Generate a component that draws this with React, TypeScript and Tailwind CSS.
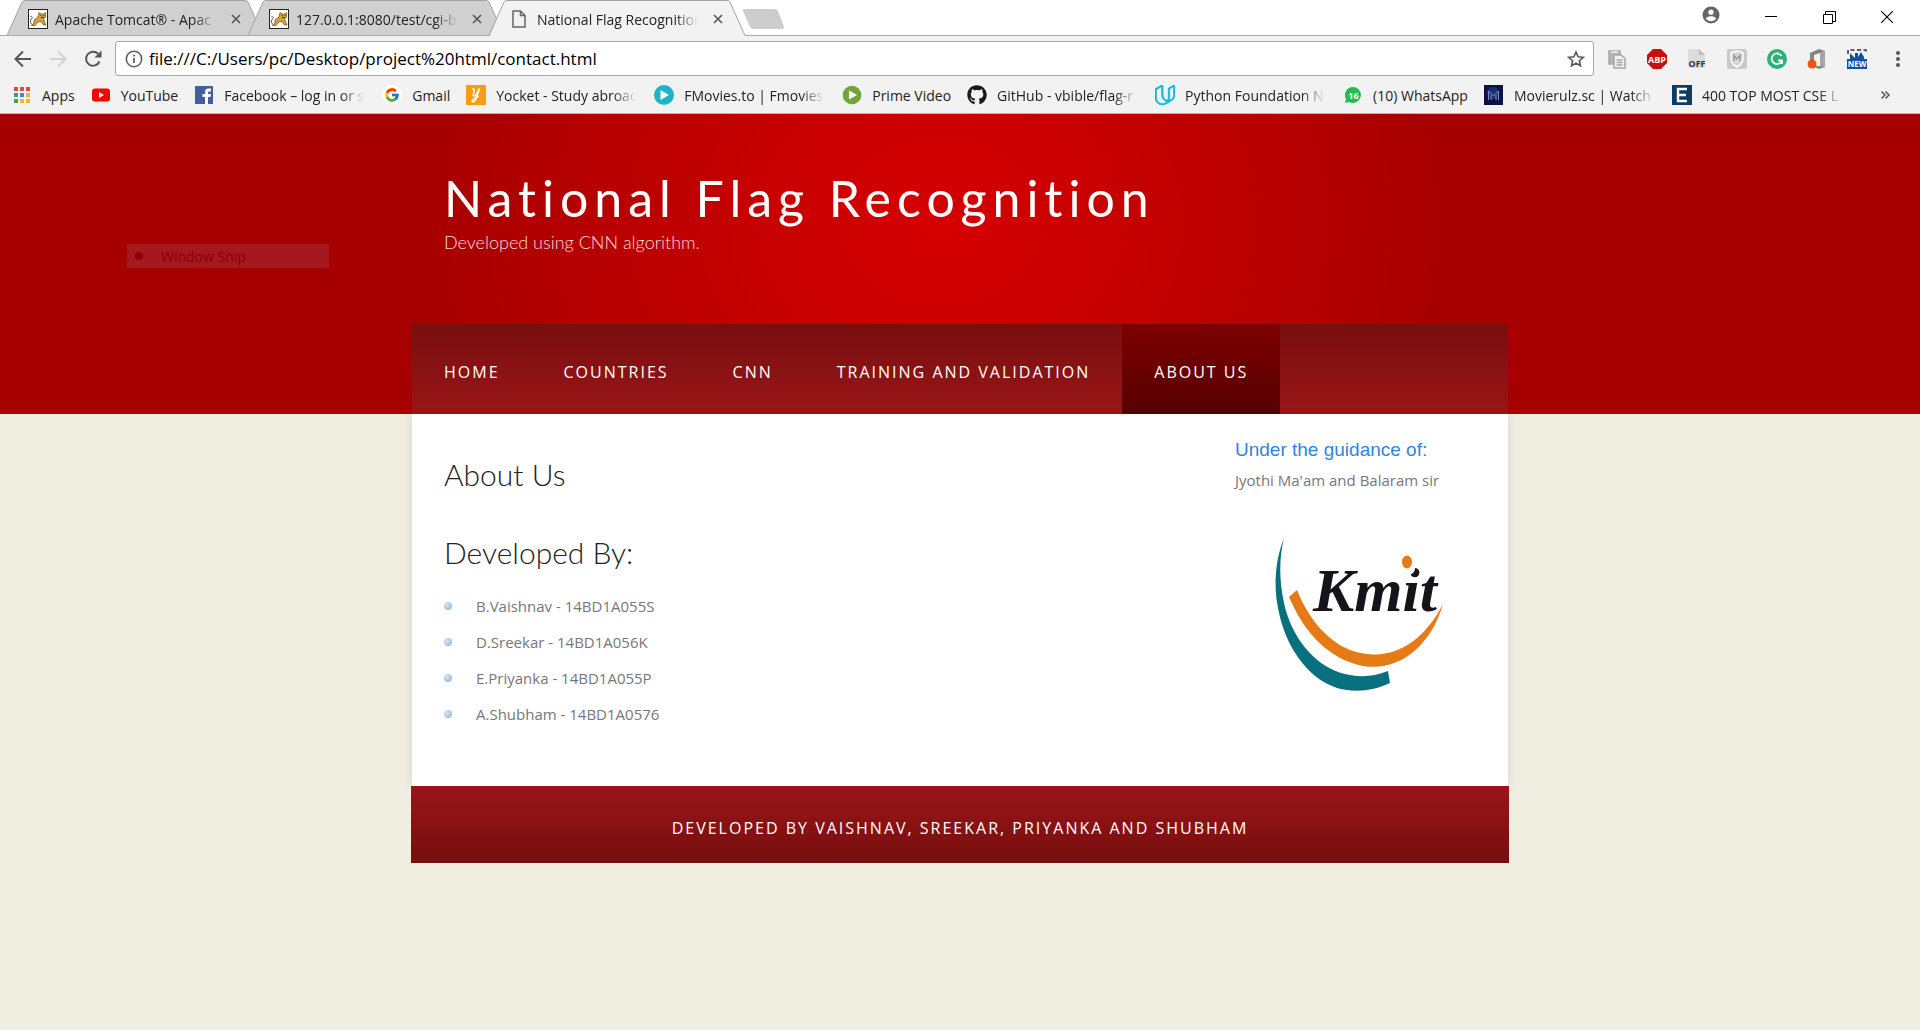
import React from "react";
import { FaGithub } from "react-icons/fa";
import { FcGoogle } from "react-icons/fc";
import { SiUdacity } from "react-icons/si";

function CatIcon() {
  return (
    <svg viewBox="0 0 20 20" className="size-5 shrink-0" aria-hidden="true">
      <rect x="0.5" y="0.5" width="19" height="19" fill="#fff" stroke="#222" />
      <path d="M5 16C2 15 1.5 11 4 9.500C5 9 4.500 7.500 2.500 7.500" fill="none" stroke="#444" strokeWidth="0.9" />
      <path d="M6 11L10 8L11 3.500L13 5H15.500L17.500 3.500V8L15.500 10L17 14L18 16H15.500L13 12.500L10 13L7 16.500H3.500L6 14Z" fill="#d2a03c" stroke="#6b4a14" strokeWidth="0.7" />
      <path d="M12.500 6.500H13.500M15.500 6.500H16.500M13 8.500H16" stroke="#3b2a10" strokeWidth="0.9" />
    </svg>
  );
}

function FileIcon() {
  return (
    <svg viewBox="0 0 20 20" className="size-5 shrink-0" fill="none" stroke="#666" strokeWidth="1.500" aria-hidden="true">
      <path d="M3 2H10.500L15 6.500V18H3Z M10.500 2V6.500H15" />
    </svg>
  );
}

type TabProps = { title: string; icon: React.ReactNode; active?: boolean };

function Tab({ title, icon, active }: TabProps) {
  return (
    <div className={active ? "relative z-10 -ml-4 h-9 w-[257px] first:ml-0" : "relative -ml-4 h-9 w-[257px] first:ml-0"}>
      <svg viewBox="0 0 257 36" className="absolute inset-0 size-full" aria-hidden="true">
        <path
          d={active ? "M0 36L1 35.500L15 2Q16 .5 18 .5H238Q240 .5 241 2L256 35.500L257 36Z" : "M0 35.500L15 2Q16 .5 18 .5H238Q240 .5 241 2L256 35.500Z"}
          fill={active ? "#f2f2f2" : "#d0d0d0"}
        />
        <path d="M0 35.500L15 2Q16 .5 18 .5H238Q240 .5 241 2L256 35.500" fill="none" stroke="#a3a3a3" />
        {!active && <path d="M0 35.500H257" stroke="#a9a9a9" />}
      </svg>
      <div className="relative flex h-full items-center pt-0.5 pl-[21px]">
        <button className="flex items-center gap-[7px]">
          {icon}
          <span className="w-[165px] overflow-hidden whitespace-nowrap text-left text-[14px] text-[#222] [mask-image:linear-gradient(to_right,black_84%,transparent_98%)]">
            {title}
          </span>
        </button>
        <button aria-label={`Close ${title}`} className="ml-1.5 flex size-5 items-center justify-center">
          <svg viewBox="0 0 10 10" className="size-2.5" stroke="#555" strokeWidth="1.600" aria-hidden="true">
            <path d="M1 1L9 9M9 1L1 9" />
          </svg>
        </button>
      </div>
    </div>
  );
}

function TabStrip() {
  return (
    <div className="flex h-9 border-b border-[#a9a9a9] bg-white pl-[7px]">
      <div className="flex h-9">
        <Tab title="Apache Tomcat® - Apac" icon={<CatIcon />} />
        <Tab title="127.0.0.1:8080/test/cgi-b" icon={<CatIcon />} />
        <Tab title="National Flag Recognition" icon={<FileIcon />} active />
      </div>
      <button aria-label="New tab" className="-ml-1 mt-2 h-[22px]">
        <svg viewBox="0 0 43 22" className="h-[22px] w-[43px]" aria-hidden="true">
          <path d="M2 1H33Q35 1 36 3L42 19Q42 21 41 21H11Q9 21 8 19L1 3Q0 1 2 1Z" fill="#cdcdcd" />
        </svg>
      </button>
      <div className="mr-1 ml-auto flex items-start">
        <button aria-label="Profile" className="mt-1.5 mr-[22px] size-[18px]">
          <svg viewBox="0 0 18 18" className="size-[18px]" aria-hidden="true">
            <circle cx="9" cy="9" r="8.500" fill="#666" />
            <circle cx="9" cy="6.200" r="2.600" fill="#fff" />
            <path d="M3.800 12.500C5 10.800 7 10.300 9 10.300S13 10.800 14.200 12.500C13 14.300 11 15.200 9 15.200S5 14.300 3.800 12.500Z" fill="#fff" />
          </svg>
        </button>
        <button aria-label="Minimize" className="flex h-[34px] w-[58px] items-center justify-center">
          <svg viewBox="0 0 12 12" className="size-3" stroke="#000" aria-hidden="true"><path d="M0 5.500H12" /></svg>
        </button>
        <button aria-label="Restore" className="flex h-[34px] w-[58px] items-center justify-center">
          <svg viewBox="0 0 13 13" className="size-[13px]" fill="none" stroke="#000" aria-hidden="true">
            <path d="M0.500 3.500H9.500V12.500H0.500ZM2.500 3.500V0.500H12.500V10.500H9.500" />
          </svg>
        </button>
        <button aria-label="Close window" className="flex h-[34px] w-[58px] items-center justify-center">
          <svg viewBox="0 0 12 12" className="size-3" stroke="#000" strokeWidth="1.100" aria-hidden="true"><path d="M0 0L12 12M12 0L0 12" /></svg>
        </button>
      </div>
    </div>
  );
}

const extensions: { name: string; art: React.ReactNode }[] = [
  {
    name: "Copy pages",
    art: (
      <g fill="#f2f2f2" stroke="#a6a6a6" strokeWidth="1.500">
        <path d="M2 2H13V15H2Z" fill="#b5b5b5" />
        <path d="M4 3H11" stroke="#f2f2f2" />
        <path d="M7 6H14L18 9.500V19H7Z" />
        <path d="M9.500 11H15.500M9.500 13.500H15.500M9.500 16H15.500" />
      </g>
    ),
  },
  {
    name: "Adblock Plus",
    art: (
      <>
        <path d="M6 0H14L20 6V14L14 20H6L0 14V6Z" fill="#c70d0d" />
        <text x="10" y="13.500" textAnchor="middle" fontSize="9" fontWeight="700" fill="#fff">ABP</text>
      </>
    ),
  },
  {
    name: "Extension off",
    art: (
      <>
        <path d="M1 0H12L18 6V19H1Z" fill="#dcdcdc" />
        <path d="M12 0V6H18Z" fill="#bdbdbd" />
        <text x="10" y="18" textAnchor="middle" fontSize="9" fontWeight="700" fill="#333">OFF</text>
      </>
    ),
  },
  {
    name: "Web advisor",
    art: (
      <>
        <rect width="20" height="20" rx="2" fill="#c9c9c9" />
        <path d="M4 3.500L10 2L16 3.500V10Q16 15 10 18Q4 15 4 10Z" fill="#d6d6d6" stroke="#fff" strokeWidth="1.400" />
        <path d="M7 12V6.500L10 10L13 6.500V12" fill="none" stroke="#999" strokeWidth="1.400" />
      </>
    ),
  },
  {
    name: "Grammar check",
    art: (
      <>
        <circle cx="10" cy="10" r="10" fill="#28b473" />
        <path d="M14.500 7A5.300 5.300 0 1 0 15 11.500H11M15 11.500V15" fill="none" stroke="#fff" strokeWidth="1.800" />
      </>
    ),
  },
  {
    name: "Office",
    art: (
      <>
        <path d="M3 4L12 0L18 2V18L12 20L5 17L13 17V4L7 6V11H3Z" fill="#858585" />
        <path d="M13 3.500V17L18 18V2Z" fill="#a5a5a5" />
        <circle cx="5" cy="15" r="4.500" fill="#f4510b" />
      </>
    ),
  },
  {
    name: "New capture",
    art: (
      <>
        <path d="M1 5V1H19V5" fill="none" stroke="#333" strokeWidth="1.500" strokeDasharray="4 2.500" />
        <path d="M0 10H3V4L8 9V4H11V8L14 3L17 8V10H20V20H0Z" fill="#1450a0" />
        <text x="10" y="18" textAnchor="middle" fontSize="8" fontWeight="700" fill="#fff">NEW</text>
      </>
    ),
  },
];

function Toolbar() {
  return (
    <div className="flex h-[41px] items-center pt-1 pr-[18px] pl-[13px]">
      <button aria-label="Back" className="mr-[15px]">
        <svg viewBox="0 0 20 20" className="size-5" fill="none" stroke="#555" strokeWidth="2" aria-hidden="true"><path d="M18 10H3M10 2.500L2.500 10L10 17.500" /></svg>
      </button>
      <button aria-label="Forward" disabled className="mr-[15px]">
        <svg viewBox="0 0 20 20" className="size-5" fill="none" stroke="#d2d2d2" strokeWidth="2" aria-hidden="true"><path d="M2 10H17M10 2.500L17.500 10L10 17.500" /></svg>
      </button>
      <button aria-label="Reload" className="mr-3">
        <svg viewBox="0 0 20 20" className="size-5" aria-hidden="true">
          <path d="M16.500 12.500A7 7 0 1 1 15 4.800" fill="none" stroke="#555" strokeWidth="2" />
          <path d="M18.500 1.500V8.500H11.500Z" fill="#555" />
        </svg>
      </button>
      <div className="flex h-[35px] flex-1 items-center rounded-[3px] border border-[#a8a8a8] bg-white pr-2 pl-[9px]">
        <svg viewBox="0 0 18 18" className="size-[18px]" fill="none" stroke="#5f5f5f" strokeWidth="1.600" aria-hidden="true">
          <circle cx="9" cy="9" r="7.700" />
          <path d="M9 8V13M9 4.800V6.500" strokeWidth="1.800" />
        </svg>
        <input aria-label="Address" defaultValue="file:///C:/Users/pc/Desktop/project%20html/contact.html" className="ml-1.5 flex-1 bg-transparent text-[17px] text-black outline-none" />
        <button aria-label="Bookmark this page">
          <svg viewBox="0 0 18 18" className="size-[18px]" fill="none" stroke="#555" strokeWidth="1.600" aria-hidden="true">
            <path d="M9 2L11.100 6.800L16.300 7.300L12.400 10.700L13.500 15.800L9 13.100L4.500 15.800L5.600 10.700L1.700 7.300L6.900 6.800Z" />
          </svg>
        </button>
      </div>
      <div className="ml-[13px] flex gap-5">
        {extensions.map((e) => (
          <button key={e.name} aria-label={e.name}>
            <svg viewBox="0 0 20 20" className="size-5" aria-hidden="true">{e.art}</svg>
          </button>
        ))}
      </div>
      <button aria-label="Menu" className="ml-[27px]">
        <svg viewBox="0 0 8 18" className="h-[18px] w-2" fill="#555" aria-hidden="true">
          <circle cx="4" cy="3" r="2" /><circle cx="4" cy="9" r="2" /><circle cx="4" cy="15" r="2" />
        </svg>
      </button>
    </div>
  );
}

const box = "size-5 shrink-0";

const bookmarks: { name: string; clipped?: boolean; icon: React.ReactNode }[] = [
  {
    name: "Apps",
    icon: (
      <svg viewBox="0 0 20 20" className={box} aria-hidden="true">
        <g fill="#e24a3f"><path d="M2 2h4v4H2zM8 2h4v4H8zM14 2h4v4h-4z" /></g>
        <path d="M2 8h4v4H2z" fill="#3fa45b" /><path d="M8 8h4v4H8z" fill="#3f86e8" /><path d="M14 8h4v4h-4z" fill="#f0b62c" />
        <path d="M2 14h4v4H2z" fill="#3fa45b" /><path d="M8 14h4v4H8zM14 14h4v4h-4z" fill="#f0b62c" />
      </svg>
    ),
  },
  {
    name: "YouTube",
    icon: (
      <svg viewBox="0 0 20 20" className={box} aria-hidden="true"><rect x="1" y="3.500" width="18" height="13" rx="3" fill="#f00" /><path d="M8 7V13L13 10Z" fill="#fff" /></svg>
    ),
  },
  {
    name: "Facebook – log in or s",
    clipped: true,
    icon: (
      <svg viewBox="0 0 20 20" className={box} aria-hidden="true">
        <rect x="1" y="1" width="18" height="18" fill="#43609c" />
        <path d="M11 19V12H8.500V9H11V7Q11 3.500 14.500 3.500H17V6.500H15.300Q14 6.500 14 7.700V9H17L16.500 12H14V19Z" fill="#fff" />
      </svg>
    ),
  },
  { name: "Gmail", icon: <span className="flex size-5 shrink-0 items-center justify-center rounded-full bg-white"><FcGoogle className="size-4" /></span> },
  {
    name: "Yocket - Study abroad",
    clipped: true,
    icon: (
      <svg viewBox="0 0 20 20" className={box} aria-hidden="true">
        <rect width="20" height="20" fill="#f99c12" />
        <path d="M6.500 4.500Q8 3 8.500 5L7 10Q7.500 12.500 10.500 9L13.500 3.500L10 14Q8 18 6 16.500Q6 14 12.500 11.500" fill="none" stroke="#fff" strokeWidth="1.500" />
      </svg>
    ),
  },
  {
    name: "FMovies.to | Fmovies.",
    clipped: true,
    icon: <svg viewBox="0 0 20 20" className={box} aria-hidden="true"><circle cx="10" cy="10" r="10" fill="#1fb3c8" /><path d="M6.500 5V15L15 10Z" fill="#fff" /></svg>,
  },
  {
    name: "Prime Video",
    icon: <svg viewBox="0 0 20 20" className={box} aria-hidden="true"><circle cx="10" cy="10" r="9.300" fill="#71a43a" /><path d="M7 5.500V14.500L15 10Z" fill="#fff" /></svg>,
  },
  { name: "GitHub - vbible/flag-r", clipped: true, icon: <FaGithub className="size-5 shrink-0 text-[#181818]" /> },
  {
    name: "Python Foundation N",
    clipped: true,
    icon: <SiUdacity className="size-5 shrink-0 text-[#12b5e2]" stroke="currentColor" strokeWidth={1} />,
  },
  {
    name: "(10) WhatsApp",
    icon: (
      <svg viewBox="0 0 20 20" className={box} aria-hidden="true">
        <path d="M10 2A8 8 0 1 1 6 17L2 18L3 14A8 8 0 0 1 10 2Z" fill="#1fbf4f" />
        <text x="10.500" y="13.500" textAnchor="middle" fontSize="9" fontWeight="700" fill="#fff">16</text>
      </svg>
    ),
  },
  {
    name: "Movierulz.sc | Watch M",
    clipped: true,
    icon: (
      <svg viewBox="0 0 20 20" className={box} aria-hidden="true">
        <rect width="19" height="20" fill="#0b1440" />
        <circle cx="9" cy="8" r="6" fill="#1c2f7a" />
        <path d="M4.500 15V6L9.500 11L14.500 6V15M7 15V10M12 15V10" fill="none" stroke="#7f90c4" strokeWidth="1" />
      </svg>
    ),
  },
  {
    name: "400 TOP MOST CSE L",
    clipped: true,
    icon: (
      <svg viewBox="0 0 20 20" className={box} aria-hidden="true"><rect width="20" height="20" fill="#0d3b66" /><path d="M15 4H6V16H15M6 10H14" fill="none" stroke="#fff" strokeWidth="2.400" /></svg>
    ),
  },
];

function BookmarksBar() {
  return (
    <nav aria-label="Bookmarks" className="flex h-[37px] items-center gap-4 border-b border-[#b5b5b5] pl-3 text-[14px] text-[#222]">
      {bookmarks.map((b) => (
        <a key={b.name} href="#" className="flex items-center gap-2.5">
          {b.icon}
          <span
            className={
              b.clipped
                ? "w-[142px] overflow-hidden whitespace-nowrap [mask-image:linear-gradient(to_right,black_82%,transparent_99%)]"
                : "whitespace-nowrap"
            }
          >
            {b.name}
          </span>
        </a>
      ))}
      <button aria-label="More bookmarks" className="mr-[30px] ml-auto">
        <svg viewBox="0 0 9 8" className="h-2 w-[9px]" fill="none" stroke="#555" strokeWidth="1.500" aria-hidden="true"><path d="M0.500 0.500L4 4L0.500 7.500M4.500 0.500L8 4L4.500 7.500" /></svg>
      </button>
    </nav>
  );
}

const pages = ["HOME", "COUNTRIES", "CNN", "TRAINING AND VALIDATION", "ABOUT US"];

const people = ["B.Vaishnav - 14BD1A055S", "D.Sreekar - 14BD1A056K", "E.Priyanka - 14BD1A055P", "A.Shubham - 14BD1A0576"];

function KmitLogo() {
  return (
    <svg viewBox="0 0 180 165" className="h-[165px] w-[180px]" role="img" aria-label="Kmit">
      <path d="M13 0C5 20 2 45 7 70C14 108 36 140 66 150C84 155 102 153 119 145L117 133C100 140 84 139 70 135C42 126 20 98 13 65C8 42 8 20 13 0Z" fill="#08707f" />
      <path d="M18 59L26 52C38 82 58 105 82 113C120 125 152 105 172 66C160 108 128 134 92 128C58 121 34 96 18 59Z" fill="#e67a14" />
      <text x="42" y="73" fontFamily="Liberation Serif, serif" fontStyle="italic" fontWeight="700" fontSize="62" fill="#17131a">Kmit</text>
      <circle cx="137" cy="30" r="7" fill="#fff" />
      <ellipse cx="136" cy="24" rx="5" ry="6.500" fill="#e67a14" />
    </svg>
  );
}

export default function App() {
  return (
    <div className="min-h-screen bg-[#f0ede1] font-['Trebuchet_MS','Open_Sans',sans-serif] text-[#777]">
      <div className="bg-[#f2f2f2] font-['Segoe_UI','Open_Sans',sans-serif]">
        <TabStrip />
        <Toolbar />
        <BookmarksBar />
      </div>

      <header className="relative bg-[radial-gradient(ellipse_520px_440px_at_49%_36%,#d60000_0%,#c80000_32%,#b60000_68%,#a60000_100%)]">
        <div className="mx-auto w-[1096px] max-w-full">
          <div className="h-[210px] px-8 pt-14 font-['Century_Gothic','Lato',sans-serif]">
            <h1 className="text-[50px] leading-[56px] tracking-[6px] text-white">National Flag Recognition</h1>
            <p className="mt-1 text-[18px] leading-6 font-light text-[#f8dcdc]">Developed using CNN algorithm.</p>
          </div>
          <nav aria-label="Main" className="bg-linear-to-b from-[#780f0f] to-[#9a1517]">
            <ul className="flex">
              {pages.map((p) => (
                <li key={p}>
                  <a
                    href="#"
                    className={
                      p === "ABOUT US"
                        ? "flex h-[90px] items-center bg-linear-to-b from-[#7e0000] to-[#560000] px-8 pt-1.5 text-[16px] tracking-[2px] text-white"
                        : "flex h-[90px] items-center px-8 pt-1.5 text-[16px] tracking-[2px] text-white"
                    }
                  >
                    {p}
                  </a>
                </li>
              ))}
            </ul>
          </nav>
        </div>
        <div className="absolute top-[130px] left-[127px] flex h-6 w-[202px] items-center bg-[#a4181e] font-['Segoe_UI','Open_Sans',sans-serif] text-[14px] text-[#850009]">
          <span className="mx-2 size-2 rounded-full bg-[#850009]" />
          <span className="ml-2.5">Window Snip</span>
        </div>
      </header>

      <main className="mx-auto flex min-h-[372px] w-[1096px] max-w-full justify-between bg-white px-8 shadow-[0_0_10px_#d9d7c8] [clip-path:inset(0_-12px)]">
        <section className="pt-10">
          <h2 className="font-['Century_Gothic','Lato',sans-serif] text-[30px] leading-10 font-light text-[#222]">About Us</h2>
          <h2 className="mt-[38px] font-['Century_Gothic','Lato',sans-serif] text-[30px] leading-10 font-light text-[#222]">Developed By:</h2>
          <ul className="mt-4">
            {people.map((p) => (
              <li key={p} className="flex h-9 items-center gap-6 text-[15px]">
                <span className="size-2 rounded-full bg-radial-[at_35%_35%] from-[#d6e8fa] to-[#86abd6]" />
                {p}
              </li>
            ))}
          </ul>
        </section>
        <aside className="w-[241px] pt-5">
          <h3 className="font-['Liberation_Sans',sans-serif] text-[19px] leading-8 text-[#2f86dc]">Under the guidance of:</h3>
          <p className="text-[15px] leading-7">Jyothi Ma'am and Balaram sir</p>
          <div className="mt-11 ml-9">
            <KmitLogo />
          </div>
        </aside>
      </main>

      <footer className="mx-auto flex h-[77px] w-[1098px] max-w-full items-center justify-center bg-linear-to-b from-[#9c1517] to-[#760e0f] pt-1.5 text-[16px] tracking-[2px] text-white">
        DEVELOPED BY VAISHNAV, SREEKAR, PRIYANKA AND SHUBHAM
      </footer>
    </div>
  );
}
